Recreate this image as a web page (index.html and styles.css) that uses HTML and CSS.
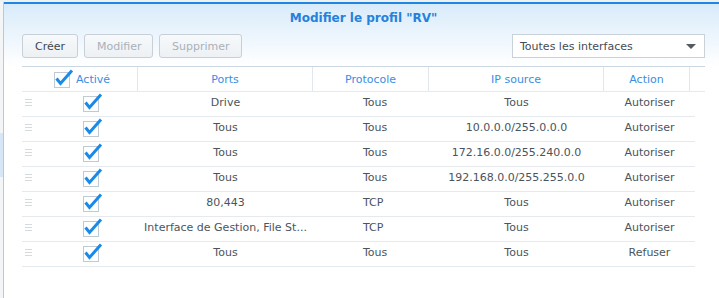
FILE: index.html
```html
<!DOCTYPE html>
<html lang="fr">

<head>
    <meta charset="UTF-8">
    <meta name="viewport" content="width=device-width, initial-scale=1.0">
    <title>Modifier le profil "RV"</title>
    <link rel="stylesheet" href="styles.css">
</head>

<body>
    <div class="desk">
        <div class="behind">
            <div class="behind-sel"></div>
        </div>

        <div class="dialog">
            <div class="title">Modifier le profil "RV"</div>

            <div class="toolbar">
                <div class="actions">
                    <button class="btn">Créer</button>
                    <button class="btn" disabled>Modifier</button>
                    <button class="btn" disabled>Supprimer</button>
                </div>
                <div class="select">
                    <span>Toutes les interfaces</span>
                    <span class="caret"></span>
                </div>
            </div>

            <div class="grid">
                <div class="row head">
                    <div class="cell first-head">
                        <svg class="check" width="20" height="20" viewBox="0 0 20 20">
                            <rect x="0.5" y="4.5" width="15" height="15" fill="#fff" stroke="#bfcad5"/>
                            <path d="M2.5 10.5 L6.5 15.5 L18 2.5" fill="none" stroke="#1a8ae8" stroke-width="3" stroke-linejoin="miter"/>
                        </svg>
                        <span>Activé</span>
                    </div>
                    <div class="cell">Ports</div>
                    <div class="cell">Protocole</div>
                    <div class="cell">IP source</div>
                    <div class="cell">Action</div>
                    <div class="cell"></div>
                </div>
            </div>

            <div class="grid" id="rules"></div>
        </div>
    </div>

    <script>
        const rules = [
            ['Drive', 'Tous', 'Tous', 'Autoriser'],
            ['Tous', 'Tous', '10.0.0.0/255.0.0.0', 'Autoriser'],
            ['Tous', 'Tous', '172.16.0.0/255.240.0.0', 'Autoriser'],
            ['Tous', 'Tous', '192.168.0.0/255.255.0.0', 'Autoriser'],
            ['80,443', 'TCP', 'Tous', 'Autoriser'],
            ['Interface de Gestion, File St...', 'TCP', 'Tous', 'Autoriser'],
            ['Tous', 'Tous', 'Tous', 'Refuser']
        ];

        const checkSvg =
            '<svg class="check" width="20" height="20" viewBox="0 0 20 20">' +
            '<rect x="0.5" y="4.5" width="15" height="15" fill="#fff" stroke="#bfcad5"/>' +
            '<path d="M2.5 10.5 L6.5 15.5 L18 2.5" fill="none" stroke="#1a8ae8" stroke-width="3" stroke-linejoin="miter"/>' +
            '</svg>';

        const list = document.getElementById('rules');
        rules.forEach(function (rule) {
            const row = document.createElement('div');
            row.className = 'row body';
            row.innerHTML =
                '<div class="cell first"><span class="handle"></span>' + checkSvg + '</div>' +
                '<div class="cell">' + rule[0] + '</div>' +
                '<div class="cell proto">' + rule[1] + '</div>' +
                '<div class="cell">' + rule[2] + '</div>' +
                '<div class="cell">' + rule[3] + '</div>' +
                '<div class="cell"></div>';
            list.appendChild(row);
        });
    </script>
</body>

</html>
```

FILE: styles.css
```css
html,
body {
    margin: 0;
    height: 100%;
}

body {
    font-family: "DejaVu Sans", Verdana, sans-serif;
    font-size: 11px;
    color: #4b545d;
    background-color: #eef0f2;
}

.desk {
    display: flex;
    height: 100%;
    padding-top: 2px;
    box-sizing: border-box;
}

.behind {
    width: 3px;
    border-right: 1px solid #c4c7ca;
    background-color: #f4f5f6;
    padding-top: 131px;
}

.behind-sel {
    height: 44px;
    background-color: #d6e6f6;
}

.dialog {
    flex: 1;
    border-top: 2px solid #1e86e3;
    background: linear-gradient(to bottom, #d8ebfa 0px, #ffffff 62px);
    padding: 0 14px 0 18px;
}

.title {
    height: 26px;
    line-height: 28px;
    text-align: center;
    font-weight: bold;
    font-size: 12px;
    color: #2581dc;
}

.toolbar {
    display: flex;
    justify-content: space-between;
    margin-top: 4px;
    height: 24px;
}

.actions {
    display: flex;
    gap: 6px;
}

.btn {
    font-family: inherit;
    font-size: 11px;
    height: 24px;
    padding: 0 12px;
    border: 1px solid #c7d0d9;
    border-radius: 3px;
    background: linear-gradient(to bottom, #f7f9fb, #edf1f4);
    color: #3f474f;
}

.btn:nth-child(1) {
    width: 56px;
}

.btn:nth-child(2) {
    width: 69px;
}

.btn:nth-child(3) {
    width: 83px;
}

.btn:disabled {
    color: #a9b1b9;
}

.select {
    width: 193px;
    height: 24px;
    box-sizing: border-box;
    border: 1px solid #c9d1d9;
    background-color: #ffffff;
    display: flex;
    align-items: center;
    justify-content: space-between;
    padding: 0 8px 0 7px;
    color: #444c54;
}

.caret {
    width: 0;
    height: 0;
    border-left: 5px solid transparent;
    border-right: 5px solid transparent;
    border-top: 5px solid #555b61;
}

.grid {
    display: flex;
    flex-direction: column;
}

.row {
    display: grid;
    grid-template-columns: 116px 175px 116px 175px 86px 15px;
    height: 25px;
    box-sizing: border-box;
    border-bottom: 1px solid #e6eaee;
}

.row.head {
    height: 26px;
    margin-top: 8px;
    border-top: 1px solid #cbd8e4;
    color: #3a8ee2;
}

.row.body {
    width: 673px;
    grid-template-columns: 116px 175px 116px 175px 91px;
}

.cell {
    display: flex;
    align-items: center;
    justify-content: center;
    white-space: nowrap;
    overflow: hidden;
}

.row.head .cell {
    border-right: 1px solid #e1e7ed;
}

.row.head .cell:last-child {
    border-right: none;
}

.first-head {
    justify-content: flex-start;
    padding-left: 32px;
    gap: 2px;
}

.first {
    justify-content: flex-start;
    padding-left: 3px;
    gap: 51px;
}

.check {
    display: block;
    margin-top: -2px;
}

.handle {
    width: 7px;
    height: 7px;
    background: repeating-linear-gradient(to bottom, #d5dade 0px, #d5dade 1px, transparent 1px, transparent 3px);
}

.proto {
    justify-content: flex-start;
    padding-left: 50px;
}
```
